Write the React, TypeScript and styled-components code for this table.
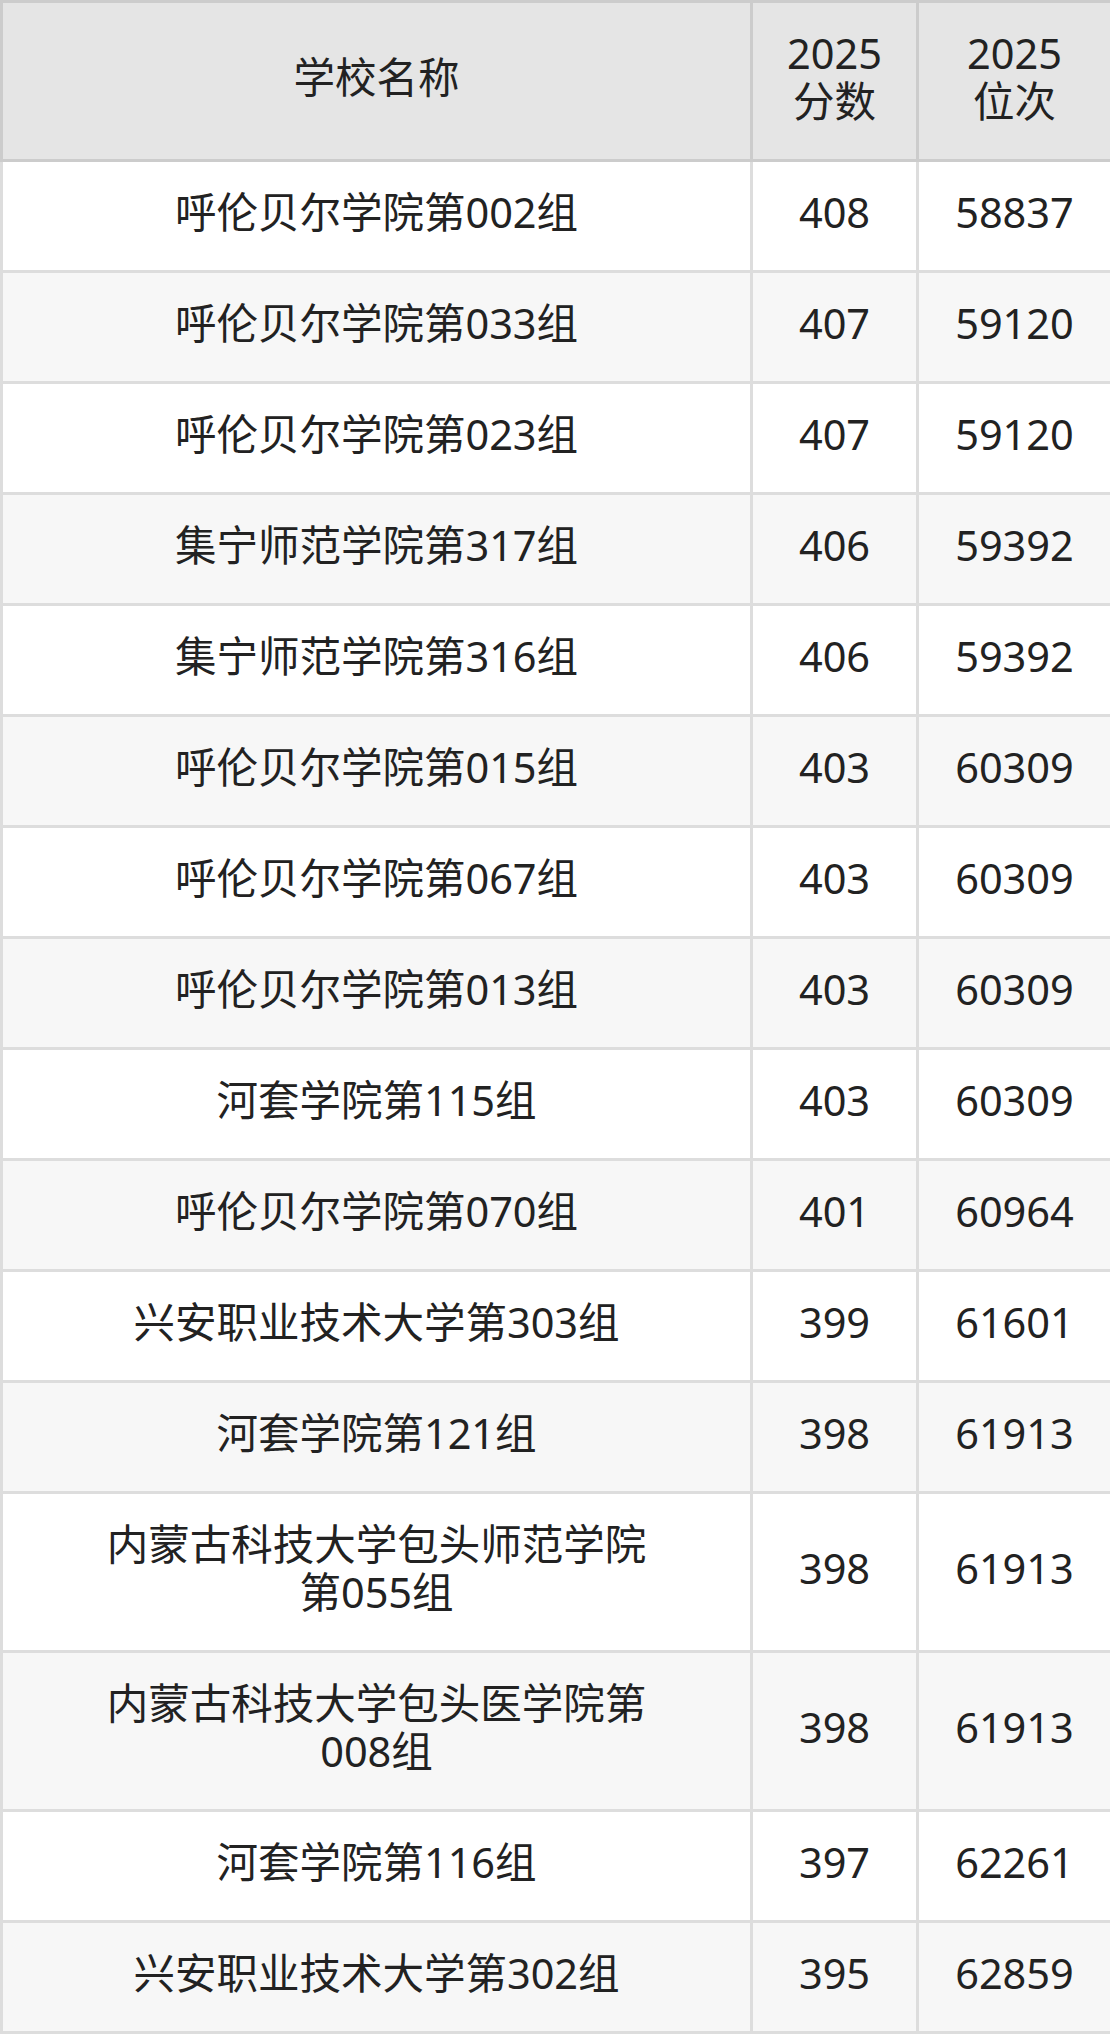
import React from "react";
import styled, { createGlobalStyle } from "styled-components";

const GlobalStyle = createGlobalStyle`
  html, body {
    margin: 0;
    padding: 0;
    background: #ffffff;
  }
  body {
    font-family: "Noto Sans", "Noto Sans CJK SC", sans-serif;
  }
`;

const Table = styled.table`
  width: 1110px;
  border-collapse: collapse;
  table-layout: fixed;
  font-family: "Noto Sans", "Noto Sans CJK SC", sans-serif;
  font-size: 41.5px;
  line-height: 48px;
  color: #222222;
`;

const HeadCell = styled.th<{ $wide?: boolean }>`
  background: #e5e5e5;
  border: 3px solid #cccccc;
  font-weight: 400;
  text-align: center;
  vertical-align: middle;
  padding: ${(p) => (p.$wide ? "26px 97px 34px" : "26px 0 34px")};
`;

const Row = styled.tr<{ $alt: boolean }>`
  background: ${(p) => (p.$alt ? "#f7f7f7" : "#ffffff")};
`;

const Cell = styled.td<{ $wide?: boolean }>`
  border: 3px solid #dddddd;
  text-align: center;
  vertical-align: middle;
  padding: ${(p) => (p.$wide ? "26px 97px 34px" : "26px 0 34px")};
`;

type Item = { name: string; score: number; rank: number };

const data: Item[] = [
  { name: "呼伦贝尔学院第002组", score: 408, rank: 58837 },
  { name: "呼伦贝尔学院第033组", score: 407, rank: 59120 },
  { name: "呼伦贝尔学院第023组", score: 407, rank: 59120 },
  { name: "集宁师范学院第317组", score: 406, rank: 59392 },
  { name: "集宁师范学院第316组", score: 406, rank: 59392 },
  { name: "呼伦贝尔学院第015组", score: 403, rank: 60309 },
  { name: "呼伦贝尔学院第067组", score: 403, rank: 60309 },
  { name: "呼伦贝尔学院第013组", score: 403, rank: 60309 },
  { name: "河套学院第115组", score: 403, rank: 60309 },
  { name: "呼伦贝尔学院第070组", score: 401, rank: 60964 },
  { name: "兴安职业技术大学第303组", score: 399, rank: 61601 },
  { name: "河套学院第121组", score: 398, rank: 61913 },
  { name: "内蒙古科技大学包头师范学院第055组", score: 398, rank: 61913 },
  { name: "内蒙古科技大学包头医学院第008组", score: 398, rank: 61913 },
  { name: "河套学院第116组", score: 397, rank: 62261 },
  { name: "兴安职业技术大学第302组", score: 395, rank: 62859 },
];

export default function App() {
  return (
    <>
      <GlobalStyle />
      <Table>
        <colgroup>
          <col style={{ width: 750 }} />
          <col style={{ width: 166 }} />
          <col style={{ width: 194 }} />
        </colgroup>
        <thead>
          <tr>
            <HeadCell $wide>学校名称</HeadCell>
            <HeadCell>
              2025
              <br />
              分数
            </HeadCell>
            <HeadCell>
              2025
              <br />
              位次
            </HeadCell>
          </tr>
        </thead>
        <tbody>
          {data.map((d, i) => (
            <Row key={i} $alt={i % 2 === 1}>
              <Cell $wide>{d.name}</Cell>
              <Cell>{d.score}</Cell>
              <Cell>{d.rank}</Cell>
            </Row>
          ))}
        </tbody>
      </Table>
    </>
  );
}
